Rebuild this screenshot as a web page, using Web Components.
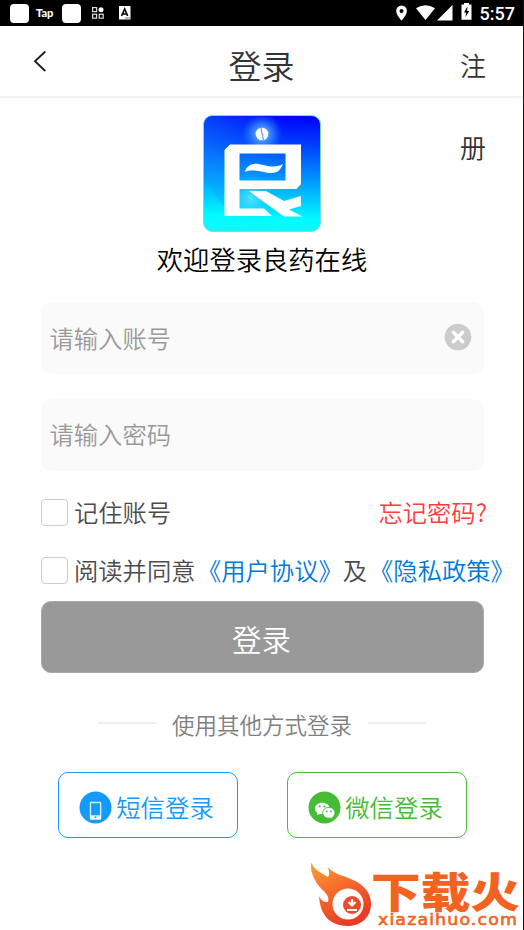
<!DOCTYPE html>
<html lang="zh-CN">
<head>
<meta charset="utf-8">
<title>登录</title>
<style>
html,body{margin:0;height:100%;background:#fff}
body{font-family:"Noto Sans CJK SC","Noto Sans",sans-serif;font-weight:350;color:#333;overflow:hidden}
</style>
</head>
<body>
<login-page></login-page>
<script>
const define = (name, html) => {
  const t = document.createElement('template');
  t.innerHTML = html;
  customElements.define(name, class extends HTMLElement {
    constructor() {
      super();
      this.attachShadow({mode: 'open'}).append(t.content.cloneNode(true));
    }
  });
};

define('status-bar', `
<style>
:host{display:flex;align-items:center;justify-content:space-between;height:26px;background:#000;color:#fff;padding:0 8px 0 10px;box-sizing:border-box}
div{display:flex;align-items:center}
svg{display:block}
.sq{width:19px;height:19px;border-radius:4px;background:#fff}
.tap{font:900 11px/25px "Lato",sans-serif;width:19px;margin:0 7px 0 7px;height:26px}
.time{font:500 18px/26px Roboto,sans-serif;height:26px;padding-top:1px;box-sizing:border-box;margin-left:8px}
</style>
<div><span class="sq"></span><span class="tap">Tap</span><span class="sq"></span>
<svg style="margin-left:11px" width="12" height="12" viewBox="0 0 12 12" fill="none" stroke="#ddd" stroke-width="1.2"><rect x=".6" y=".6" width="4" height="4"/><rect x=".6" y="7.2" width="4" height="4"/><rect x="7.2" y="7.2" width="4" height="4"/><circle cx="9" cy="2.700" r="2.500" fill="#fff" stroke="none"/></svg>
<svg style="margin-left:15px" width="12" height="14" viewBox="0 0 12 14"><path fill="#fff" d="M0 0h11.500v13.500H0z"/><path d="M2.500 10 5.700 3l3 7M4 8h4" fill="none" stroke="#000" stroke-width="1.600"/><path d="M6 12h5" stroke="#777" stroke-width="1"/></svg>
</div>
<div>
<svg width="11" height="16" viewBox="0 0 11 16"><path fill="#fff" fill-rule="evenodd" d="M5.500.5A5.400 5.400 0 0 0 .2 5.900C.2 9.800 5.500 15.500 5.500 15.500S10.900 9.800 10.900 5.900A5.400 5.400 0 0 0 5.500.5zm0 3.400a2 2 0 1 1 0 4 2 2 0 0 1 0-4z"/></svg>
<svg style="margin-left:9px" width="19" height="16" viewBox="0 0 19 16"><path fill="#fff" d="M0 3.200Q9.500-2.800 19 3.200L9.500 15z"/></svg>
<svg style="margin-left:2px" width="16" height="16" viewBox="0 0 16 16"><path fill="#fff" d="M15.500 0v15.500H0z"/></svg>
<svg style="margin:-3px 0 0 8px" width="11" height="17" viewBox="0 0 11 17"><path fill="#fff" d="M3 0h5v1.500h2.500v15.300H.5V1.500H3z"/><path d="M6.500 3.500 3 9.500h2.200L4.500 14l3.800-6H6.100z"/></svg>
<span class="time">5:57</span></div>`);

define('nav-bar', `
<style>
:host{display:grid;grid-template-columns:80px 1fr 80px;height:72px;border-bottom:2px solid #f4f4f4;box-sizing:border-box;color:#333}
.back{padding:24px 0 0 33px}
svg{display:block}
.title{font-size:33px;line-height:78px;text-align:center}
.reg{font-size:26px;line-height:82px;width:26px;height:164px;margin:-2px 0 0 17px;word-break:break-all}
</style>
<div class="back"><svg width="14" height="24" viewBox="0 0 14 24" fill="none" stroke="#222" stroke-width="1.900"><path d="M12.300 1.500 2 11.300l10.300 9.700"/></svg></div>
<div class="title"><slot></slot></div>
<div class="reg"><slot name="action"></slot></div>`);

define('app-brand', `
<style>
:host{display:flex;flex-direction:column;align-items:center;padding-top:17px;height:187px;box-sizing:border-box}
svg{display:block}
p{margin:6px 0 0;padding-left:1px;font-size:26.300px;line-height:41px;color:#000;white-space:nowrap}
</style>
<svg width="118" height="117" viewBox="0 0 118 117">
<defs>
<linearGradient id="b" x1=".55" y1="0" x2=".5" y2="1"><stop offset="0" stop-color="#0004fa"/><stop offset=".25" stop-color="#0043fd"/><stop offset=".55" stop-color="#009aff"/><stop offset=".88" stop-color="#00fcff"/><stop offset="1" stop-color="#12f8fa"/></linearGradient>
<radialGradient id="g"><stop offset="0" stop-color="#c8e4ff"/><stop offset=".4" stop-color="#4c9cff" stop-opacity=".8"/><stop offset="1" stop-color="#178aff" stop-opacity="0"/></radialGradient>
<radialGradient id="h"><stop offset="0" stop-color="#66eaff" stop-opacity=".8"/><stop offset="1" stop-color="#1cf" stop-opacity="0"/></radialGradient>
<linearGradient id="l"><stop offset="0" stop-color="#1598ff" stop-opacity=".35"/><stop offset=".7" stop-color="#1598ff" stop-opacity="0"/></linearGradient>
</defs>
<rect x=".5" y=".5" width="117" height="116" rx="9" fill="url(#b)" stroke="#85cffb"/>
<path d="M1 46C3 70 14 90 34 100h50c20-10 31-30 33-54V10q0-9-9-9H10Q1 1 1 10z" fill="url(#l)"/>
<circle cx="59" cy="19" r="20" fill="url(#g)"/><circle cx="48" cy="83" r="25" fill="url(#h)"/>
<circle cx="59" cy="19" r="6.300" fill="#fff"/><path d="m58 13 2.500 12" stroke="#579ffb" stroke-width="1.200"/>
<path fill="#fff" fill-rule="evenodd" d="M27 29.500h71V69l-4.500 5H36.500v19.500H61L69 101H21.500V35zM36.500 38.500v27h46v-27z"/>
<path fill="#fff" d="M46 76h17l18 10 17-5v10l-12 3.500 13.500 7H81z"/>
<path fill="#fff" d="M41.500 57c3-7 8-9 14-8 7 1 15 5 24.500 0-3 7-6 9-12 9-8 0-16-5-26.500-1z"/>
</svg>
<p><slot></slot></p>`);

define('text-field', `
<style>
:host{display:flex;align-items:center;justify-content:space-between;height:72px;border-radius:10px;background:#fafafa;padding:0 12.500px 0 9px;box-sizing:border-box;font-size:24.300px;line-height:70px;color:#999}
:host([clear]) svg{display:block}
:host(:not([clear])) span{padding-bottom:2px}
span{margin-left:-.5px}
svg{display:none;margin-top:-3px}
</style>
<span><slot></slot></span>
<svg width="28" height="28" viewBox="0 0 28 28"><circle cx="14" cy="14" r="13.300" fill="#ccc"/><path d="m9.300 9.300 9.400 9.400m0-9.400-9.400 9.400" stroke="#fff" stroke-width="3.400" stroke-linecap="round"/></svg>`);

define('check-row', `
<style>
:host{display:flex;align-items:center;height:58px;font-size:24.300px;line-height:58px;color:#4c4c4c;white-space:nowrap}
i{width:27px;height:27px;flex:none;border:1.500px solid #ccc;border-radius:4px;box-sizing:border-box;background:#fff;margin-right:6px}
.end{margin-left:auto;color:#ff3b3b}
::slotted(a){color:#0079d2}
::slotted(a.gap){margin-left:2px}
::slotted(a.first){margin-left:1.500px}
</style>
<i></i><span><slot></slot></span><span class="end"><slot name="end"></slot></span>`);

define('submit-button', `
<style>
:host{display:block;box-sizing:border-box;height:72px;border:1px solid #aaa;border-radius:10px;background:#999;color:#fff;text-align:center;font-size:29.500px;line-height:72px;padding-right:2px}
</style><slot></slot>`);

define('rule-label', `
<style>
:host{display:flex;align-items:center;justify-content:center;gap:16px;font-size:22.500px;line-height:36px;color:#808080;padding-right:1px}
:host::before,:host::after{content:"";width:58px;height:2px;background:#eee;margin-top:-3px}
</style><slot></slot>`);

define('alt-button', `
<style>
:host{display:flex;align-items:center;justify-content:center;width:180px;height:66px;box-sizing:border-box;border:1.500px solid currentColor;border-radius:10px;font-size:24.400px;line-height:62px;gap:4px;white-space:nowrap;padding-right:3px}
span{padding-top:3px}
::slotted(svg){display:block;margin-top:4px}
</style><slot name="icon"></slot><span><slot></slot></span>`);

define('site-mark', `
<style>
:host{position:absolute;left:308px;top:860px;width:214px;height:70px;display:block}
svg{display:block;overflow:visible}
</style>
<svg width="214" height="70" viewBox="0 0 214 70">
<defs><linearGradient id="f" x1="0" y1="0" x2=".5" y2="1"><stop offset="0" stop-color="#ff9f36"/><stop offset=".5" stop-color="#f66a2c"/><stop offset="1" stop-color="#e83b25"/></linearGradient></defs>
<path fill="url(#f)" d="M3.500 2.500C5 9 13 13 20 17c2-3 1-6 0-10 5 7 14 8 25 13 12 5 18 14 18 24 0 13-10 22-23 22C22 66 12 55 11 36c2 4 4 6 9 6 1-4 0-5-1-7-3-5-9-8-12-15C4 14 2 9 3.500 2.500z"/>
<circle cx="40" cy="44" r="15.500" fill="#fff"/><circle cx="44" cy="45" r="9" fill="#ec4b29"/>
<path d="M44 39v5m-3.500-2 3.500 3.500 3.500-3.500M39 50h10" fill="none" stroke="#fff" stroke-width="2.200"/>
<g fill="#f26322"><text x="63" y="48" font-family="Liberation Sans,Noto Sans CJK SC,sans-serif" font-weight="900" font-size="42" textLength="149" lengthAdjust="spacingAndGlyphs">下载火</text>
<text x="70" y="65" font-family="DejaVu Sans,sans-serif" font-weight="400" font-size="15.500" textLength="140" lengthAdjust="spacingAndGlyphs" letter-spacing="1" stroke="#f26322" stroke-width=".6">xiazaihuo.com</text></g>
</svg>`);

define('login-page', `
<style>
:host{display:block;height:930px;position:relative;overflow:hidden;box-sizing:border-box;border-right:1px solid #101820;background:#fff}
main{display:flex;flex-direction:column;padding:17px 39px 0 41px}
text-field+text-field{margin-top:25px}
.remember{margin-top:12px;width:446px}
submit-button{margin-top:2px}
rule-label{margin-top:33px}
.alts{display:flex;justify-content:space-between;padding:0 17px;margin-top:30px}
.sms{color:#149aff}.wx{color:#46bb36}
</style>
<status-bar></status-bar>
<nav-bar>登录<span slot="action">注册</span></nav-bar>
<app-brand>欢迎登录良药在线</app-brand>
<main>
<text-field clear>请输入账号</text-field>
<text-field>请输入密码</text-field>
<check-row class="remember">记住账号<span slot="end">忘记密码?</span></check-row>
<check-row>阅读并同意<a class="first">《用户协议》</a>及<a class="gap">《隐私政策》</a></check-row>
<submit-button>登录</submit-button>
<rule-label>使用其他方式登录</rule-label>
<div class="alts">
<alt-button class="sms"><svg slot="icon" width="33" height="33" viewBox="0 0 34 34"><circle cx="17" cy="17" r="16.500" fill="#149aff"/><rect x="11.800" y="11.800" width="10.500" height="17" rx=".6" fill="none" stroke="#fff" stroke-opacity=".85" stroke-width="1.400"/><path d="M11.500 25h11v4h-11z" fill="#fff" opacity=".9"/><circle cx="17" cy="27" r="1" fill="#149aff"/></svg>短信登录</alt-button>
<alt-button class="wx"><svg slot="icon" width="33" height="33" viewBox="0 0 34 34"><circle cx="17" cy="17" r="16.500" fill="#46bb36"/><path fill="#fff" d="M14.500 12c-4.200 0-7.300 2.700-7.300 6 0 2 1 3.600 2.700 4.700l-.6 2.300 2.700-1.400c1 .3 2 .3 3 .2 0-5 3-7.300 7-7.300-.7-2.700-3.700-4.500-7.500-4.500z"/><path fill="#fff" stroke="#46bb36" stroke-width=".8" d="M21.500 17c-3.700 0-6.300 2.300-6.300 5.500s2.600 5.500 6.300 5.500l2-.3 2.200 1.200-.5-2c1.600-1 2.500-2.700 2.500-4.400 0-3.200-2.600-5.500-6.200-5.500z"/><g fill="#46bb36"><circle cx="12" cy="16" r="1.100"/><circle cx="17" cy="16" r="1.100"/><circle cx="19.400" cy="21" r=".9"/><circle cx="23.700" cy="21" r=".9"/></g></svg>微信登录</alt-button>
</div>
</main>
<site-mark></site-mark>`);
</script>
</body>
</html>
